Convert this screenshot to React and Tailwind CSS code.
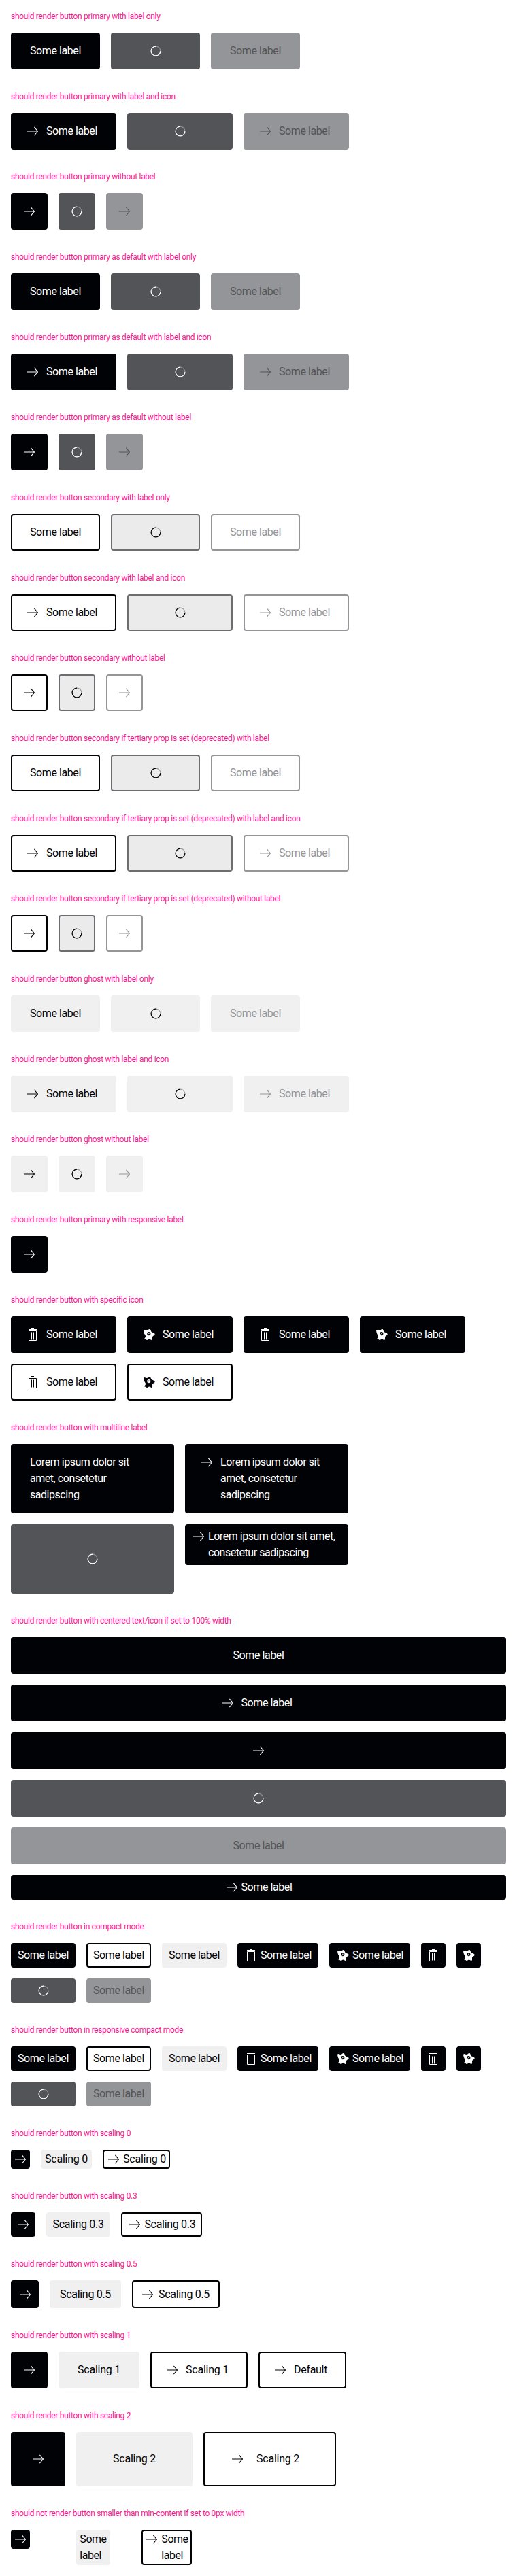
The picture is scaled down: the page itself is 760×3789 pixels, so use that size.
import React from "react";
import clsx from "clsx";

const ArrowIcon = () => (
  <svg viewBox="0 0 24 24" className="size-6 shrink-0" fill="none" stroke="currentColor">
    <path d="M4 12h15.5" />
    <path d="M14.4 5.800l5 6.200-5 6.200" strokeWidth="1.1" />
  </svg>
);

const TrashIcon = () => (
  <svg viewBox="0 0 24 24" className="size-6 shrink-0" fill="none" stroke="currentColor">
    <path d="M10 3.5h4M6 4.5h12M6.5 6.5h11v14h-11zM10.5 8.5v11M13.5 8.5v11" />
  </svg>
);

const StarIcon = () => (
  <svg viewBox="0 0 24 24" className="size-6 shrink-0">
    <path
      fill="currentColor"
      fillRule="evenodd"
      d="M4.600 5.200c.9-.7 2.500.7 4.200.9 1.600.1 2.300-1.900 4.200-2 1.700 0 1.400 2.600 2.700 4 1.300 1.100 5 1.500 5 3.400 0 1.500-2.700 2-3.500 3.500-.6 1.300.5 4.300-.8 4.800-1.300.6-2.400-1-3.900-1.200-1.500 0-2 1.500-3.500 1.500-.7 0-.8-.9-1.700-1.100-1-.2-1.900 0-1.900-.9 0-1.300 1.700-1.900 1.700-3.600 0-1.900-1.800-2.500-2.200-4.400-.4-1.500-1.300-4.100-.3-4.900zM11.800 8a2.600 2.600 0 1 0 0 5.200 2.600 2.600 0 0 0 0-5.200z"
    />
    <path fill="currentColor" d="M11.900 9.400a.8.8 0 1 1 0 1.600.8.8 0 0 1 0-1.600zM10 11.600h1.200v.8H10z" />
  </svg>
);

const icons = { arrow: ArrowIcon, trash: TrashIcon, star: StarIcon };

const Spinner = () => (
  <svg viewBox="0 0 24 24" className="size-6 shrink-0" fill="none" stroke="currentColor" strokeWidth="1.2">
    <circle cx="12" cy="12" r="6.9" opacity="0.35" />
    <path d="M18.900 12a6.900 6.900 0 1 1-6.900-6.900" />
  </svg>
);

const tones = {
  primary: "bg-[#010205] border-[#010205] text-white",
  primaryLoading: "bg-[#535457] border-[#535457] text-white",
  primaryDisabled: "bg-[#949598] border-[#949598] text-[#535457]",
  secondary: "bg-white border-[#010205] text-[#010205]",
  secondaryLoading: "bg-[#ebebeb] border-[#6b6d70] text-[#010205]",
  secondaryDisabled: "bg-white border-[#949598] text-[#949598]",
  ghost: "bg-[#f0f0f1] border-[#f0f0f1] text-[#010205]",
  ghostLoading: "bg-[#f0f0f1] border-[#f0f0f1] text-[#010205]",
  ghostDisabled: "bg-[#f0f0f1] border-[#f0f0f1] text-[#949598]",
};

/* Inner paddings (the 2px border comes on top) for each density. */
const density = {
  s0: { y: "", icon: "", label: "px-1", both: "pl-0.5 pr-1 gap-0.5" },
  s03: { y: "py-1", icon: "px-1", label: "px-[7.6px]", both: "pl-[5.8px] pr-[7.8px] gap-[2.4px]" },
  compact: { y: "py-1", icon: "px-1", label: "px-2", both: "pl-1.5 pr-2 gap-0.5" },
  s05: { y: "py-[6.5px]", icon: "px-[6.5px]", label: "px-[13px]", both: "pl-[9px] pr-[13px] gap-1" },
  s1: { y: "py-[13px]", icon: "px-[13px]", label: "px-[26px]", both: "pl-[18px] pr-[26px] gap-2" },
  s2: { y: "py-[26px]", icon: "px-[26px]", label: "px-[52px]", both: "pl-9 pr-[52px] gap-4" },
};

const labelWidths = {
  "Some label": "w-[75px] whitespace-nowrap tracking-[-0.42px]",
  "Scaling 0": "w-[63px] whitespace-nowrap tracking-[-0.23px]",
  "Scaling 0.3": "w-[75px] whitespace-nowrap tracking-[-0.3px]",
  "Scaling 0.5": "w-[75px] whitespace-nowrap tracking-[-0.3px]",
  "Scaling 1": "w-[63px] whitespace-nowrap tracking-[-0.23px]",
  "Scaling 2": "w-[63px] whitespace-nowrap tracking-[-0.23px]",
  Default: "w-[49px] whitespace-nowrap tracking-[-0.3px]",
};

function Button({ tone = "primary", icon, label, size = "s1", loading, className }) {
  const d = density[size];
  const Icon = icon && icons[icon];
  const padX = icon && label ? d.both : label ? d.label : d.icon;
  return (
    <button
      type="button"
      className={clsx(
        "relative flex items-start justify-center rounded-[4px] border-2 text-left",
        tones[tone],
        d.y,
        padX,
        className
      )}
    >
      {Icon && <span className={clsx("flex", loading && "invisible")}><Icon /></span>}
      {label && (
        <span className={clsx(labelWidths[label] || "flex-1 tracking-[-0.46px]", loading && "invisible")}>{label}</span>
      )}
      {loading && (
        <span className="absolute inset-0 flex items-center justify-center">
          <Spinner />
        </span>
      )}
    </button>
  );
}

function Section({ title, children }) {
  return (
    <section>
      <h2 className="mb-4 h-4 whitespace-nowrap text-[12px] leading-4 tracking-[-0.31px] text-[#ff1493]">{title}</h2>
      <div className="flex flex-wrap items-start gap-4">{children}</div>
    </section>
  );
}

const Trio = ({ title, kind, icon, label }) => (
  <Section title={title}>
    <Button tone={kind} icon={icon} label={label} />
    <Button tone={kind + "Loading"} icon={icon} label={label} loading />
    <Button tone={kind + "Disabled"} icon={icon} label={label} />
  </Section>
);

const trios = [
  ["should render button primary with label only", "primary", null, "Some label"],
  ["should render button primary with label and icon", "primary", "arrow", "Some label"],
  ["should render button primary without label", "primary", "arrow", null],
  ["should render button primary as default with label only", "primary", null, "Some label"],
  ["should render button primary as default with label and icon", "primary", "arrow", "Some label"],
  ["should render button primary as default without label", "primary", "arrow", null],
  ["should render button secondary with label only", "secondary", null, "Some label"],
  ["should render button secondary with label and icon", "secondary", "arrow", "Some label"],
  ["should render button secondary without label", "secondary", "arrow", null],
  ["should render button secondary if tertiary prop is set (deprecated) with label", "secondary", null, "Some label"],
  ["should render button secondary if tertiary prop is set (deprecated) with label and icon", "secondary", "arrow", "Some label"],
  ["should render button secondary if tertiary prop is set (deprecated) without label", "secondary", "arrow", null],
  ["should render button ghost with label only", "ghost", null, "Some label"],
  ["should render button ghost with label and icon", "ghost", "arrow", "Some label"],
  ["should render button ghost without label", "ghost", "arrow", null],
];

const Compact = ({ title }) => (
  <Section title={title}>
    <Button size="compact" label="Some label" />
    <Button size="compact" tone="secondary" label="Some label" />
    <Button size="compact" tone="ghost" label="Some label" />
    <Button size="compact" icon="trash" label="Some label" />
    <Button size="compact" icon="star" label="Some label" />
    <Button size="compact" icon="trash" />
    <Button size="compact" icon="star" />
    <Button size="compact" tone="primaryLoading" label="Some label" loading />
    <Button size="compact" tone="primaryDisabled" label="Some label" />
  </Section>
);

const Scaling = ({ value, size, children }) => (
  <Section title={"should render button with scaling " + value}>
    <Button size={size} icon="arrow" />
    <Button size={size} tone="ghost" label={"Scaling " + value} />
    <Button size={size} tone="secondary" icon="arrow" label={"Scaling " + value} />
    {children}
  </Section>
);

const lorem = "Lorem ipsum dolor sit amet, consetetur sadipscing";

export default function App() {
  return (
    <main className="flex min-h-[3789px] w-[760px] flex-col gap-8 bg-white p-4 font-[Roboto,sans-serif] text-[16px] leading-6">
      {trios.map(([title, kind, icon, label]) => (
        <Trio key={title} title={title} kind={kind} icon={icon} label={label} />
      ))}
      <Section title="should render button primary with responsive label">
        <Button icon="arrow" />
      </Section>
      <Section title="should render button with specific icon">
        <Button icon="trash" label="Some label" />
        <Button icon="star" label="Some label" />
        <Button icon="trash" label="Some label" />
        <Button icon="star" label="Some label" />
        <Button tone="secondary" icon="trash" label="Some label" />
        <Button tone="secondary" icon="star" label="Some label" />
      </Section>
      <Section title="should render button with multiline label">
        <div className="grid grid-cols-[240px_240px] items-start gap-4">
          <Button label={lorem} />
          <Button icon="arrow" label={lorem} />
          <Button tone="primaryLoading" label={lorem} loading />
          <Button size="compact" icon="arrow" label={lorem} />
        </div>
      </Section>
      <Section title="should render button with centered text/icon if set to 100% width">
        <Button className="w-full" label="Some label" />
        <Button className="w-full" icon="arrow" label="Some label" />
        <Button className="w-full" icon="arrow" />
        <Button className="w-full" tone="primaryLoading" label="Some label" loading />
        <Button className="w-full" tone="primaryDisabled" label="Some label" />
        <Button className="w-full" size="compact" icon="arrow" label="Some label" />
      </Section>
      <Compact title="should render button in compact mode" />
      <Compact title="should render button in responsive compact mode" />
      <Scaling value="0" size="s0" />
      <Scaling value="0.3" size="s03" />
      <Scaling value="0.5" size="s05" />
      <Scaling value="1" size="s1">
        <Button tone="secondary" icon="arrow" label="Default" />
      </Scaling>
      <Scaling value="2" size="s2" />
      <Section title="should not render button smaller than min-content if set to 0px width">
        <div className="grid grid-cols-[80px_80px_80px] items-start justify-items-start gap-4">
          <Button size="s0" icon="arrow" />
          <Button size="s0" tone="ghost" label={"Some\u200b label"} className="w-[50px]" />
          <Button size="s0" tone="secondary" icon="arrow" label={"Some\u200b label"} className="w-[74px]" />
        </div>
      </Section>
    </main>
  );
}
